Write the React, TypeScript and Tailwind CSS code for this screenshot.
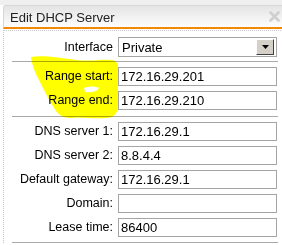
import React from "react";

const font = { fontFamily: '"Liberation Sans", Arial, sans-serif' };

type Row = { label: string; value: string };

const rangeRows: Row[] = [
  { label: "Range start:", value: "172.16.29.201" },
  { label: "Range end:", value: "172.16.29.210" },
];

const netRows: Row[] = [
  { label: "DNS server 1:", value: "172.16.29.1" },
  { label: "DNS server 2:", value: "8.8.4.4" },
  { label: "Default gateway:", value: "172.16.29.1" },
  { label: "Domain:", value: "" },
  { label: "Lease time:", value: "86400" },
];

function Field({ label, value }: Row) {
  return (
    <div className="flex items-center h-[19px]">
      <span className="w-[101px] text-right text-[12.5px] text-black leading-none">{label}</span>
      <div className="ml-[5px] w-[159px] h-[19px] border border-[#a5a5a5] bg-white flex items-center px-[2px] text-[13px] text-black leading-none">
        {value}
      </div>
    </div>
  );
}

function Separator() {
  return <div className="h-px w-[266px] bg-[#a9a9a9]" />;
}

export default function App() {
  return (
    <div className="relative w-[282px] h-[245px] overflow-hidden bg-white" style={font}>
      <div className="h-[5px] bg-[#efefef]" />
      <div className="ml-[3px] w-[300px]">
        {/* Title bar */}
        <div className="relative h-[24px] rounded-tl-[3px] border-t border-l border-[#d6d6d6] bg-gradient-to-b from-[#e4e4e4] to-[#fdfdfd] border-b-2 border-b-[#f0880a] flex items-center pl-[6px]">
          <span className="text-[13px] text-[#222] leading-none mt-[1px]">Edit DHCP Server</span>
          <svg className="absolute left-[265px] top-[5px]" width="11" height="11" viewBox="0 0 11 11">
            <path d="M1.5 1.5 L9.5 9.5 M9.5 1.5 L1.5 9.5" stroke="#cfcfcf" strokeWidth="2.6" strokeLinecap="round" />
          </svg>
        </div>
        {/* Body */}
        <div className="border-l border-t border-dotted border-[#c8c8c8] mt-px pl-[8px] pt-[6px] flex flex-col">
          <div className="flex items-center h-[20px]">
            <span className="w-[101px] text-right text-[12.5px] text-black leading-none">Interface</span>
            <div className="ml-[5px] w-[159px] h-[20px] border border-[#a5a5a5] bg-white flex items-center justify-between pl-[3px] pr-[2px]">
              <span className="text-[13px] text-black leading-none">Private</span>
              <div className="w-[18px] h-[16px] bg-[#d4d0c8] border border-t-white border-l-white border-r-[#404040] border-b-[#404040] flex items-center justify-center">
                <svg width="7" height="4" viewBox="0 0 7 4">
                  <path d="M0 0 L7 0 L3.5 4 Z" fill="#000" />
                </svg>
              </div>
            </div>
          </div>
          <div className="mt-[4px]">
            <Separator />
          </div>
          <div className="mt-[5px] flex flex-col gap-[5px]">
            {rangeRows.map((r) => (
              <Field key={r.label} {...r} />
            ))}
          </div>
          <div className="mt-[6px]">
            <Separator />
          </div>
          <div className="mt-[5px] flex flex-col gap-[5px]">
            {netRows.map((r) => (
              <Field key={r.label} {...r} />
            ))}
          </div>
          <div className="mt-[5px]">
            <Separator />
          </div>
        </div>
      </div>
      {/* Yellow highlighter scribble */}
      <svg className="absolute left-0 top-0 pointer-events-none mix-blend-multiply" width="282" height="245" viewBox="0 0 282 245">
        <path
          fillRule="evenodd"
          fill="#ffff00"
          d="M31,57 C42,55 60,58 76,60 C92,62 106,58 115,61 L118,64 L118,108 C117,114 113,118 106,118 C96,119 82,117 70,118 C63,118 59,115 56,111 C50,102 45,92 40,82 C35,73 32,65 31,57 Z M84,88 C89,86 95,86 99,88 C97,92 90,93 85,92 Z"
        />
      </svg>
    </div>
  );
}
